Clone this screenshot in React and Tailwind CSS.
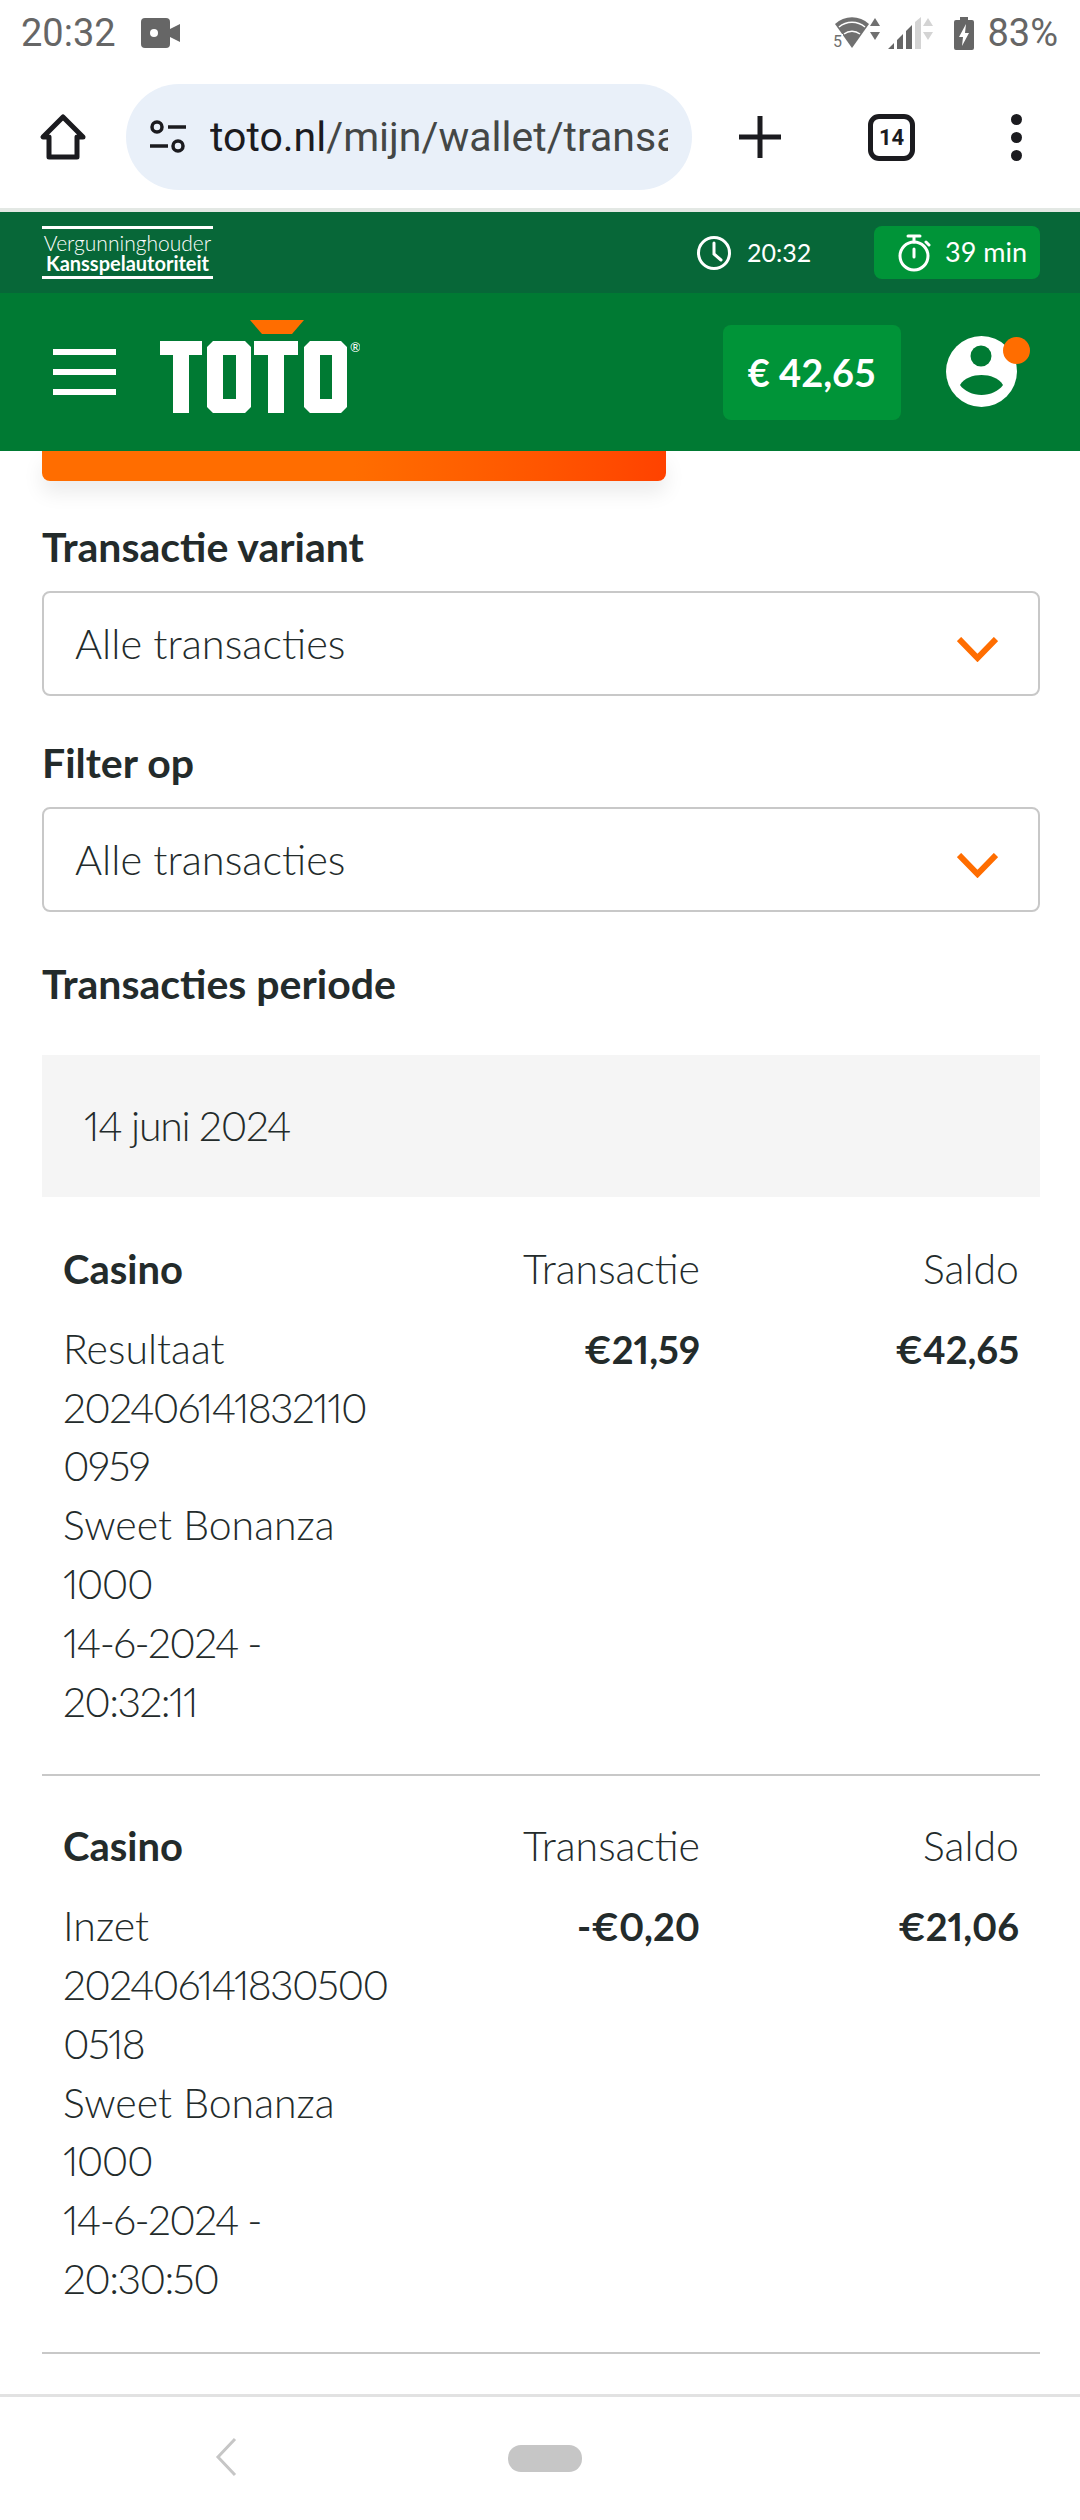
import React from 'react';

const FONT = "font-['Lato','Noto_Sans',sans-serif]";

const TRANSACTIONS = [
    {
        id: 1,
        lines: [
            { text: 'Resultaat' },
            { text: '202406141832110', digits: true },
            { text: '0959', digits: true },
            { text: 'Sweet Bonanza' },
            { text: '1000', digits: true },
            { text: '14-6-2024 -', digits: true },
            { text: '20:32:11', digits: true },
        ],
        amount: '€21,59',
        balance: '€42,65',
    },
    {
        id: 2,
        lines: [
            { text: 'Inzet' },
            { text: '202406141830500', digits: true },
            { text: '0518', digits: true },
            { text: 'Sweet Bonanza' },
            { text: '1000', digits: true },
            { text: '14-6-2024 -', digits: true },
            { text: '20:30:50', digits: true },
        ],
        amount: '-€0,20',
        balance: '€21,06',
    },
];

const StatusBar = () => (
    <div className="h-[66px] flex items-center justify-between pl-[21px] pr-[22px] bg-white text-[#666666] font-['Roboto',sans-serif]">
        <div className="flex items-center gap-[25px]">
            <span className="text-[38px] leading-none">20:32</span>
            <svg width="39" height="30" viewBox="0 0 39 30">
                <rect x="0" y="0" width="29" height="30" rx="4" fill="#666666" />
                <circle cx="13" cy="15" r="4" fill="#ffffff" />
                <path d="M29 11l10-5v18l-10-5z" fill="#666666" />
            </svg>
        </div>
        <div className="flex items-center">
            <svg width="48" height="38" viewBox="0 0 48 38">
                <g transform="translate(0 2)">
                    <path d="M2 8a25 25 0 0 1 34 0L19 32z" fill="#707070" />
                    <path d="M6 11a20 20 0 0 1 26 0M11 18a13 13 0 0 1 16 0" stroke="#ffffff" strokeWidth="1.500" fill="none" />
                    <path d="M42 2l5 8h-10zM42 24l5-8h-10z" fill="#707070" />
                    <rect x="0" y="18" width="10" height="16" fill="#ffffff" />
                    <text x="0" y="31" fontSize="16" fill="#707070">5</text>
                </g>
            </svg>
            <svg width="45" height="34" viewBox="0 0 45 34" className="ml-[7px]">
                <path d="M0 33l6-6v6zM9 33V24l6-6v15zM18 33V15l6-6v24z" fill="#666666" />
                <path d="M27 33V6l6-5v32z" fill="#d4d4d4" />
                <path d="M40 2l5 8H35zM40 24l5-8H35z" fill="#d4d4d4" />
            </svg>
            <svg width="20" height="33" viewBox="0 0 20 33" className="ml-[21px]">
                <path d="M6 0h8v3h4a2 2 0 0 1 2 2v26a2 2 0 0 1-2 2H2a2 2 0 0 1-2-2V5a2 2 0 0 1 2-2h4z" fill="#666666" />
                <path d="M12 7l-7 13h4l-1 9 7-13h-4z" fill="#ffffff" />
            </svg>
            <span className="ml-[13px] text-[38px] leading-none">83%</span>
        </div>
    </div>
);

const BrowserBar = () => (
    <div className="h-[146px] flex items-center bg-white border-b-[4px] border-[#e3e8e4] font-['Roboto',sans-serif]">
        <div className="w-[126px] flex justify-center">
            <svg width="48" height="48" viewBox="0 0 48 48" fill="none" stroke="#1b1b1f" strokeWidth="5" strokeLinejoin="round">
                <path d="M24 4L4 24h6v20h28V24h6z" />
            </svg>
        </div>
        <div className="w-[566px] h-[106px] rounded-[53px] bg-[#e9f0f9] flex items-center pl-[22px] pr-[24px]">
            <svg width="40" height="40" viewBox="0 0 40 40" fill="none" stroke="#1b1b1f" strokeWidth="3.500" className="shrink-0 mr-[22px]">
                <circle cx="9" cy="10" r="5" />
                <path d="M20 10h18M2 29h18" />
                <circle cx="30" cy="29" r="5" />
            </svg>
            <div className="overflow-hidden whitespace-nowrap text-[41px] leading-[48px] text-[#444746]">
                <span className="text-[#1b1b1f]">toto.nl</span>/mijn/wallet/transactions
            </div>
        </div>
        <div className="flex-1 flex items-center pl-[46px]">
            <svg width="44" height="44" viewBox="0 0 44 44" fill="none" stroke="#1b1b1f" strokeWidth="5" className="shrink-0">
                <path d="M22 1v42M1 22h42" />
            </svg>
            <div className="shrink-0 ml-[86px] w-[47px] h-[47px] rounded-[11px] border-[5px] border-[#1b1b1f] flex items-center justify-center text-[22px] font-bold text-[#1b1b1f]">
                14
            </div>
            <div className="shrink-0 ml-[96px] flex flex-col gap-[7px]">
                <div className="w-[11px] h-[11px] rounded-full bg-[#1b1b1f]" />
                <div className="w-[11px] h-[11px] rounded-full bg-[#1b1b1f]" />
                <div className="w-[11px] h-[11px] rounded-full bg-[#1b1b1f]" />
            </div>
        </div>
    </div>
);

const TopStrip = () => (
    <div className="h-[81px] bg-[#076738] flex items-center justify-between pl-[42px] pr-[40px] text-white">
        <div className="w-[171px] h-[53px] border-y-[3px] border-white flex flex-col justify-center items-center text-[20px] leading-[21px] whitespace-nowrap">
            <span className="font-light text-[21px]">Vergunninghouder</span>
            <span className="font-bold">Kansspelautoriteit</span>
        </div>
        <div className="flex items-center">
            <svg width="36" height="36" viewBox="0 0 36 36" fill="none" stroke="#ffffff" strokeWidth="3" strokeLinecap="round">
                <circle cx="18" cy="18" r="15.500" />
                <path d="M18 8v11l7 6" />
            </svg>
            <span className="ml-[15px] text-[25px] w-[63px]">20:32</span>
            <div className="ml-[64px] w-[166px] h-[53px] rounded-[8px] bg-[#009438] flex items-center pl-[23px]">
                <svg width="34" height="38" viewBox="0 0 34 38" fill="none" stroke="#ffffff" strokeWidth="3" strokeLinecap="round">
                    <circle cx="17" cy="22" r="14" />
                    <path d="M11 2h12M17 2v6M17 15v8M29 8l3 3" />
                </svg>
                <span className="ml-[14px] text-[27px] whitespace-nowrap">39 min</span>
            </div>
        </div>
    </div>
);

const TotoLogo = () => (
    <svg width="200" height="96" viewBox="0 0 200 96">
        <path d="M90 0h54l-12 14h-30z" fill="#ff6d00" />
        <path d="M0 21h42v14H29v58H13V35H0z" fill="#ffffff" />
        <path d="M53 21h32l6 6v60l-6 6H53l-6-6V27zM63 35v44h13V35z" fillRule="evenodd" fill="#ffffff" />
        <path d="M94 21h44v14h-14v58h-16V35H94z" fill="#ffffff" />
        <path d="M150 21h31l6 6v60l-6 6h-31l-6-6V27zM160 35v44h12V35z" fillRule="evenodd" fill="#ffffff" />
        <text x="190" y="32" fontSize="13" fill="#ffffff">®</text>
    </svg>
);

const MainHeader = () => (
    <div className="h-[158px] bg-[#007a33] flex items-center pl-[53px] pr-[63px] text-white">
        <div className="w-[63px] flex flex-col gap-[14px]">
            <div className="h-[6px] bg-white" />
            <div className="h-[6px] bg-white" />
            <div className="h-[6px] bg-white" />
        </div>
        <div className="ml-[44px] mb-[8px]">
            <TotoLogo />
        </div>
        <div className="ml-auto w-[178px] h-[95px] rounded-[8px] bg-[#009438] flex items-center justify-center text-[38px] font-bold whitespace-nowrap">
            € 42,65
        </div>
        <div className="relative ml-[45px] w-[71px] h-[71px] mt-[-2px]">
            <svg width="71" height="71" viewBox="0 0 71 71">
                <circle cx="35.500" cy="35.500" r="35.500" fill="#ffffff" />
                <circle cx="35" cy="20" r="10.500" fill="#007a33" />
                <path d="M14 49c4-7 13-10 21.500-10s17.500 3 21.500 10c-4 6-13 10-21.500 10S18 55 14 49z" fill="#007a33" />
            </svg>
            <div className="absolute top-[1px] left-[57px] w-[27px] h-[27px] rounded-full bg-[#ff6d00]" />
        </div>
    </div>
);

const OrangeChevron = () => (
    <svg width="41" height="25" viewBox="0 0 41 25" fill="none" stroke="#ff6d00" strokeWidth="6">
        <path d="M2 2l18.500 19L39 2" />
    </svg>
);

const SelectField = ({ label, className }) => (
    <div className={className}>
        <div className="text-[41px] leading-[44px] font-bold text-[#232b2b]">{label}</div>
        <div className="mt-[22px] h-[105px] rounded-[8px] border-2 border-[#c8c8c8] flex items-center justify-between pl-[31px] pr-[40px]">
            <span className="text-[41.500px] font-light text-[#232b2b]">Alle transacties</span>
            <div className="mt-[12px]">
                <OrangeChevron />
            </div>
        </div>
    </div>
);

const TransactionRow = ({ item }) => (
    <div className="px-[21px] pt-[41px] pb-[43px] border-b-2 border-[#c8c8c8] text-[41px] leading-[58.800px] font-light text-[#232b2b] proportional-nums">
        <div className="flex">
            <div className="w-[340px]">
                <div className="font-bold text-[40px] mb-[21px]">Casino</div>
                {item.lines.map((line) => (
                    <div key={line.text} className={line.digits ? 'tracking-[-1.600px]' : ''}>
                        {line.text}
                    </div>
                ))}
            </div>
            <div className="w-[297px] text-right">
                <div className="mb-[21px]">Transactie</div>
                <div className="font-bold text-[38px]">{item.amount}</div>
            </div>
            <div className="flex-1 text-right">
                <div className="mb-[21px]">Saldo</div>
                <div className="font-bold text-[38px]">{item.balance}</div>
            </div>
        </div>
    </div>
);

const App = () => {
    return (
        <div className={`w-[1080px] h-[2520px] overflow-hidden bg-white flex flex-col ${FONT}`}>
            <StatusBar />
            <BrowserBar />
            <TopStrip />
            <MainHeader />

            <div className="flex-1 min-h-0 overflow-hidden pl-[42px] pr-[40px]">
                {/* Button cut off by the sticky header */}
                <div className="w-[624px] h-[30px] rounded-b-[8px] bg-gradient-to-r from-[#ff6d00] from-50% to-[#ff4200] shadow-[0_12px_20px_rgba(0,0,0,0.08)]" />

                <SelectField label="Transactie variant" className="mt-[44px]" />
                <SelectField label="Filter op" className="mt-[45px]" />

                <div className="mt-[50px] text-[41px] leading-[44px] font-bold text-[#232b2b]">Transacties periode</div>

                <div className="mt-[49px] mb-[2px] h-[142px] bg-[#f5f5f5] flex items-center pl-[42px] text-[41px] tracking-[-1.300px] font-light text-[#232b2b] proportional-nums">
                    14 juni 2024
                </div>

                {TRANSACTIONS.map((item) => (
                    <TransactionRow key={item.id} item={item} />
                ))}
            </div>

            <div className="h-[3px] bg-[#e2e2e2]" />
            <div className="h-[123px] shrink-0 flex items-center bg-white">
                <svg width="24" height="40" viewBox="0 0 24 40" fill="none" stroke="#c6c6c6" strokeWidth="3" className="ml-[214px] mb-[4px]">
                    <path d="M21 2L4 20l17 18" />
                </svg>
                <div className="ml-[270px] w-[74px] h-[27px] rounded-[13px] bg-[#c6c6c6]" />
            </div>
        </div>
    );
};

export default App;
